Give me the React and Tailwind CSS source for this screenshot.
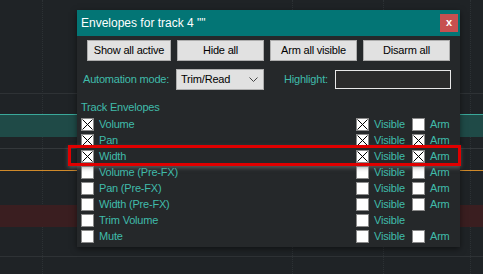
import React from "react";

const font = { fontFamily: '"Liberation Sans", Arial, sans-serif' };

function Box({ checked }) {
  return (
    <div className="w-[13px] h-[13px] bg-white border border-[#8a8a8a] flex items-center justify-center shrink-0">
      {checked && (
        <svg width="11" height="11" viewBox="0 0 11 11">
          <path d="M0.5 0.5 L10.5 10.5 M10.5 0.5 L0.5 10.5" stroke="#000" strokeWidth="1" fill="none" />
        </svg>
      )}
    </div>
  );
}

const rows = [
  { name: "Volume", c: true, v: true, a: false, arm: true },
  { name: "Pan", c: true, v: true, a: true, arm: true },
  { name: "Width", c: true, v: true, a: true, arm: true },
  { name: "Volume (Pre-FX)", c: false, v: false, a: false, arm: true },
  { name: "Pan (Pre-FX)", c: false, v: false, a: false, arm: true },
  { name: "Width (Pre-FX)", c: false, v: false, a: false, arm: true },
  { name: "Trim Volume", c: false, v: false, a: false, arm: false },
  { name: "Mute", c: false, v: false, a: false, arm: true },
];

function Btn({ w, children }) {
  return (
    <div className={`${w} h-[21px] bg-[#e1e1e1] border border-[#adadad] flex items-center justify-center text-[11px] tracking-[-0.2px] text-black whitespace-nowrap`}>
      {children}
    </div>
  );
}

const label = "text-[#40bcaa] text-[11px] tracking-[-0.2px] whitespace-nowrap";

export default function App() {
  return (
    <div className="relative w-[483px] h-[274px] overflow-hidden bg-[#1f2326]" style={font}>
      {/* background grid */}
      <div className="absolute inset-0 flex">
        <div className="w-[43px] border-r border-dotted border-[#2c3134]" />
        <div className="w-[250px] border-r border-dotted border-[#2c3134]" />
        <div className="w-[91px] border-r border-dotted border-[#2c3134]" />
        <div className="w-[87px] border-r border-dotted border-[#2c3134]" />
      </div>
      {/* track lanes */}
      <div className="absolute inset-0 flex flex-col">
        <div className="h-[94px] border-b border-[#2e3235]" />
        <div className="h-[20px]" />
        <div className="h-[23px] bg-[#1f4a47] border-t border-[#3aa89a]" />
        <div className="h-[12px] border-b border-[#34383b]" />
        <div className="h-[21px]" />
        <div className="h-[1px] bg-[#d08a2a]" />
        <div className="h-[34px]" />
        <div className="h-[22px] bg-[#3a1e20]" />
        <div className="h-[30px] border-b border-[#2e3235]" />
      </div>

      {/* dialog */}
      <div className="absolute left-[77px] top-[10px] w-[383px] h-[237px] bg-[#25282a] shadow-[0_2px_6px_rgba(0,0,0,0.5)] flex flex-col">
        <div className="h-[26px] bg-[#037575] flex items-center justify-between pl-[4px] pr-[2px]">
          <span className="text-white text-[12px]">Envelopes for track 4 ""</span>
          <div className="w-[18px] h-[18px] bg-[#c75050] flex items-center justify-center text-white text-[11px] font-bold leading-none pb-[1px]">
            x
          </div>
        </div>
        <div className="flex flex-col pl-[10px] pt-[4px]">
          <div className="flex gap-[6px]">
            <Btn w="w-[84px]">Show all active</Btn>
            <Btn w="w-[87px]">Hide all</Btn>
            <Btn w="w-[87px]">Arm all visible</Btn>
            <Btn w="w-[87px]">Disarm all</Btn>
          </div>
          <div className="flex items-center mt-[8px] -ml-[4px] h-[21px]">
            <span className={`${label} w-[93px]`}>Automation mode:</span>
            <div className="w-[88px] h-[21px] bg-[#e1e1e1] border border-[#adadad] flex items-center justify-between pl-[4px] pr-[5px] text-[11px] tracking-[-0.2px] text-black">
              <span>Trim/Read</span>
              <svg width="9" height="6" viewBox="0 0 9 6">
                <path d="M0.5 0.5 L4.5 4.5 L8.5 0.5" stroke="#444" strokeWidth="1" fill="none" />
              </svg>
            </div>
            <span className={`${label} ml-[20px] w-[51px]`}>Highlight:</span>
            <div className="w-[116px] h-[19px] bg-[#2b2b2b] border border-[#e8e8e8]" />
          </div>
          <div className={`${label} -ml-[6px] mt-[10px] h-[14px] leading-[14px]`}>Track Envelopes</div>
          <div className="flex flex-col -ml-[6px] mt-[4px]">
            {rows.map((r) => (
              <div key={r.name} className="h-[16px] flex items-start">
                <div className="w-[18px]"><Box checked={r.c} /></div>
                <span className={`${label} leading-[13px] w-[257px]`}>{r.name}</span>
                <div className="w-[18px]"><Box checked={r.v} /></div>
                <span className={`${label} leading-[13px] w-[38px]`}>Visible</span>
                {r.arm && (
                  <>
                    <div className="w-[18px]"><Box checked={r.a} /></div>
                    <span className={`${label} leading-[13px]`}>Arm</span>
                  </>
                )}
              </div>
            ))}
          </div>
        </div>
      </div>

      {/* red highlight */}
      <div className="absolute left-[68px] top-[145px] w-[393px] h-[21px] border-[3px] border-[#e00000] shadow-[0_2px_4px_rgba(120,120,120,0.6)]" />
    </div>
  );
}
